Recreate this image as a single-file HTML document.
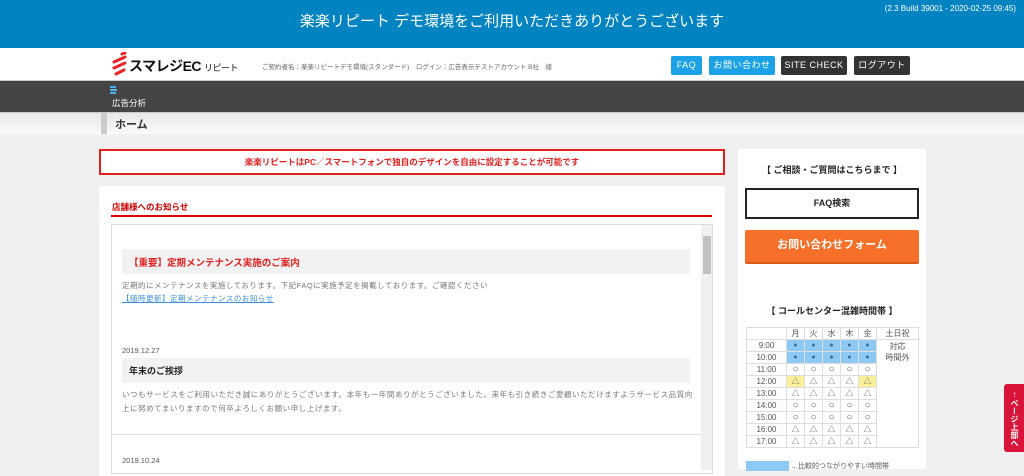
<!DOCTYPE html>
<html><head><meta charset="utf-8"><style>
*{margin:0;padding:0;box-sizing:border-box}
body{width:1024px;height:467px;overflow:hidden;background:#f0f0f0;font-family:"Liberation Sans","Noto Sans CJK JP",sans-serif;position:relative;color:#333}
.a{position:absolute}
.btn{position:absolute;top:56px;height:19px;color:#fff;font-size:9px;line-height:19px;text-align:center;border-radius:2px;letter-spacing:.5px}
table{border-collapse:collapse;font-size:8px;color:#555}
td{border:1px solid #ddd;height:12px;text-align:center;padding:0;line-height:11px}
td.o{font-size:10px}
.b{background:#8ec9f4;color:#3a6e99;font-size:7px}
.y{background:#fbf09a}
</style></head><body>
<div class="a" style="left:0;top:0;width:1024px;height:48px;background:#0083c1"></div>
<div class="a" style="left:0;top:10px;width:1024px;text-align:center;color:#fff;font-size:15px">楽楽リピート デモ環境をご利用いただきありがとうございます</div>
<div class="a" style="right:8px;top:4px;color:#fff;font-size:8px">(2.3 Build 39001 - 2020-02-25 09:45)</div>
<div class="a" style="left:0;top:48px;width:1024px;height:32px;background:#fff"></div>
<svg class="a" style="left:112px;top:52px" width="16" height="24"><g stroke="#e8232a" stroke-width="3" stroke-linecap="round"><line x1="10" y1="2" x2="13" y2="1"/><line x1="2" y1="10" x2="13" y2="5"/><line x1="2" y1="16" x2="13" y2="11"/><line x1="4" y1="22" x2="12" y2="18"/></g></svg>
<div class="a" style="left:129px;top:56px;font-size:14px;font-weight:bold;color:#111;letter-spacing:-.5px">スマレジEC<span style="font-size:9px;font-weight:normal;margin-left:3px">リピート</span></div>
<div class="a" style="left:262px;top:61px;font-size:6.5px;color:#666">ご契約者名：楽楽リピートデモ環境(スタンダード)　ログイン：広告表示テストアカウント B社　様</div>
<div class="btn" style="left:671px;width:31px;background:#1aa1e6">FAQ</div>
<div class="btn" style="left:709px;width:66px;background:#1aa1e6">お問い合わせ</div>
<div class="btn" style="left:781px;width:66px;background:#333">SITE CHECK</div>
<div class="btn" style="left:854px;width:56px;background:#333">ログアウト</div>
<div class="a" style="left:0;top:80px;width:1024px;height:32px;background:#444;border-top:1px solid #ccc"></div>
<div class="a" style="left:110px;top:86px;width:6px;height:2px;background:#4fb3ef;box-shadow:0 3px 0 #4fb3ef,0 6px 0 #4fb3ef"></div>
<div class="a" style="left:113px;top:89px;width:4px;height:2px;background:#4fb3ef"></div>
<div class="a" style="left:112px;top:97px;font-size:8.5px;color:#fff">広告分析</div>
<div class="a" style="left:0;top:112px;width:1024px;height:22px;background:linear-gradient(#e8e8e8,#fafafa);border-top:1px solid #ccc"></div>
<div class="a" style="left:101px;top:112px;width:6px;height:22px;background:#ccc"></div>
<div class="a" style="left:115px;top:116px;font-size:11px;font-weight:bold;color:#333">ホーム</div>
<div class="a" style="left:99px;top:149px;width:626px;height:26px;background:#fff;border:2px solid #e02020;text-align:center;font-size:8.5px;font-weight:bold;color:#e02020;line-height:22px">楽楽リピートはPC／スマートフォンで独自のデザインを自由に設定することが可能です</div>
<div class="a" style="left:99px;top:186px;width:626px;height:290px;background:#fff"></div>
<div class="a" style="left:112px;top:201px;font-size:8.5px;font-weight:bold;color:#c00">店舗様へのお知らせ</div>
<div class="a" style="left:111px;top:215px;width:601px;height:2px;background:#d00"></div>
<div class="a" style="left:111px;top:224px;width:602px;height:250px;border:1px solid #ddd;background:#fff"></div>
<div class="a" style="left:701px;top:225px;width:11px;height:245px;background:#f0f0f0"></div>
<div class="a" style="left:703px;top:236px;width:8px;height:38px;background:#c1c1c1"></div>
<div class="a" style="left:122px;top:249px;width:568px;height:25px;background:#f2f2f2"></div>
<div class="a" style="left:129px;top:255px;font-size:9.5px;font-weight:bold;color:#e02020">【重要】定期メンテナンス実施のご案内</div>
<div class="a" style="left:122px;top:280px;font-size:7.5px;color:#777;letter-spacing:.5px">定期的にメンテナンスを実施しております。下記FAQに実施予定を掲載しております。ご確認ください</div>
<div class="a" style="left:122px;top:293px;font-size:7.5px;color:#3a8fe0;text-decoration:underline;letter-spacing:.5px">【随時更新】定期メンテナンスのお知らせ</div>
<div class="a" style="left:112px;top:434px;width:589px;height:1px;background:#ddd"></div>
<div class="a" style="left:122px;top:346px;font-size:7.5px;color:#555">2019.12.27</div>
<div class="a" style="left:122px;top:358px;width:568px;height:25px;background:#f2f2f2"></div>
<div class="a" style="left:129px;top:364px;font-size:9px;font-weight:bold;color:#222">年末のご挨拶</div>
<div class="a" style="left:122px;top:388px;width:575px;font-size:7.5px;color:#777;line-height:14px;letter-spacing:.55px">いつもサービスをご利用いただき誠にありがとうございます。本年も一年間ありがとうございました。来年も引き続きご愛顧いただけますようサービス品質向上に努めてまいりますので何卒よろしくお願い申し上げます。</div>
<div class="a" style="left:122px;top:456px;font-size:7.5px;color:#555">2019.10.24</div>
<div class="a" style="left:738px;top:149px;width:188px;height:320px;background:#fff"></div>
<div class="a" style="left:738px;top:163px;width:188px;text-align:center;font-size:9px;font-weight:bold;color:#222">【 ご相談・ご質問はこちらまで 】</div>
<div class="a" style="left:745px;top:188px;width:174px;height:31px;border:2px solid #222;text-align:center;line-height:27px;font-size:9px;font-weight:bold;color:#222">FAQ検索</div>
<div class="a" style="left:745px;top:230px;width:174px;height:32px;background:#f7702a;border-radius:2px;box-shadow:0 2px 0 #d65a18;text-align:center;line-height:31px;font-size:11px;font-weight:bold;color:#fff">お問い合わせフォーム</div>
<div class="a" style="left:738px;top:304px;width:188px;text-align:center;font-size:9px;font-weight:bold;color:#222">【 コールセンター混雑時間帯 】</div>
<table class="a" style="left:746px;top:327px;width:173px">
<tr><td style="width:40px"></td><td>月</td><td>火</td><td>水</td><td>木</td><td>金</td><td style="width:42px">土日祝</td></tr>
<tr><td>9:00</td><td class="b">●</td><td class="b">●</td><td class="b">●</td><td class="b">●</td><td class="b">●</td><td rowspan="9" style="vertical-align:top;line-height:11px;padding-top:1px">対応<br>時間外</td></tr>
<tr><td>10:00</td><td class="b">●</td><td class="b">●</td><td class="b">●</td><td class="b">●</td><td class="b">●</td></tr>
<tr><td>11:00</td><td class="o">○</td><td class="o">○</td><td class="o">○</td><td class="o">○</td><td class="o">○</td></tr>
<tr><td>12:00</td><td class="y">△</td><td>△</td><td>△</td><td>△</td><td class="y">△</td></tr>
<tr><td>13:00</td><td>△</td><td>△</td><td>△</td><td>△</td><td>△</td></tr>
<tr><td>14:00</td><td class="o">○</td><td class="o">○</td><td class="o">○</td><td class="o">○</td><td class="o">○</td></tr>
<tr><td>15:00</td><td class="o">○</td><td class="o">○</td><td class="o">○</td><td class="o">○</td><td class="o">○</td></tr>
<tr><td>16:00</td><td>△</td><td>△</td><td>△</td><td>△</td><td>△</td></tr>
<tr><td>17:00</td><td>△</td><td>△</td><td>△</td><td>△</td><td>△</td></tr>
</table>
<div class="a" style="left:746px;top:461px;width:43px;height:10px;background:#8ec9f4"></div>
<div class="a" style="left:791px;top:461px;font-size:7px;color:#555">…比較的つながりやすい時間帯</div>
<div class="a" style="left:1004px;top:384px;width:20px;height:68px;background:#d8143a;border-radius:3px 0 0 3px;color:#fff;font-size:8px;font-weight:bold;writing-mode:vertical-rl;text-orientation:upright;text-align:center;line-height:20px">↑ページ上部へ</div>
</body></html>
